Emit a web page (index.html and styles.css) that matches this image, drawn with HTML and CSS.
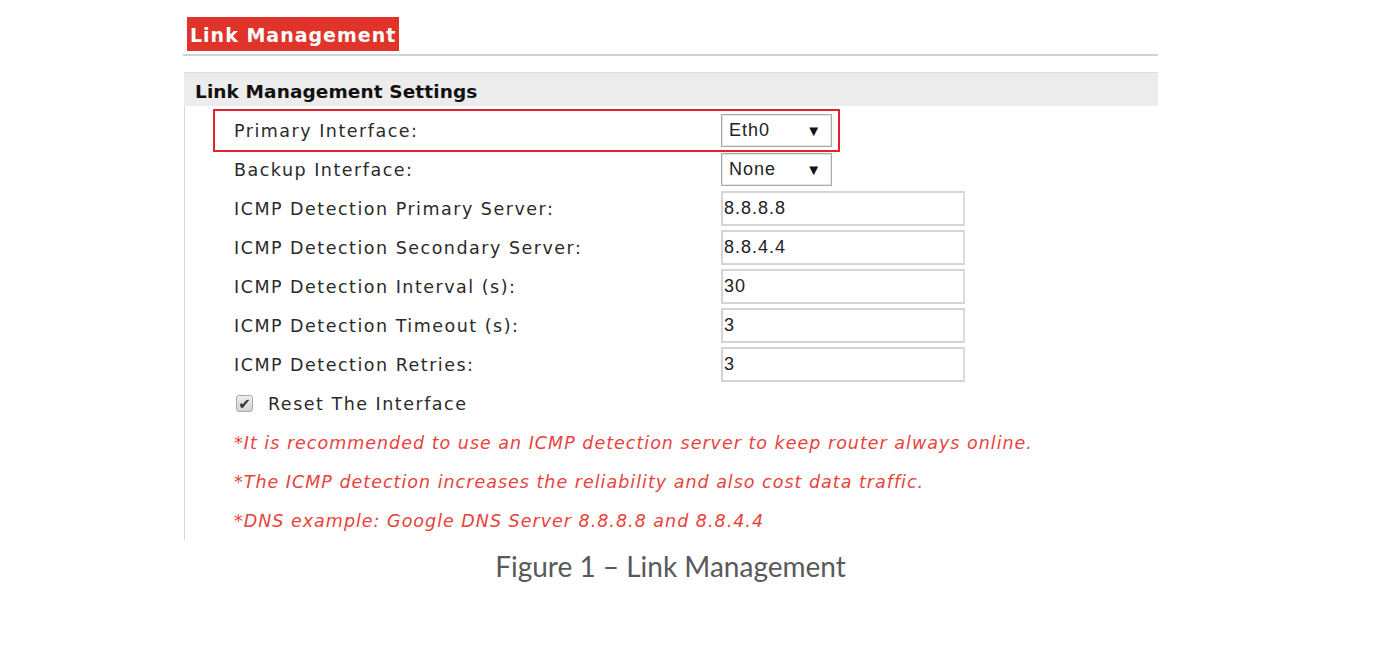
FILE: index.html
```html
<!DOCTYPE html>
<html lang="en">
<head>
    <meta charset="UTF-8">
    <title>Link Management</title>
    <link rel="stylesheet" href="styles.css">
</head>
<body>
<div class="page">
    <div class="title-bar">
        <span class="title">Link Management</span>
    </div>
    <div class="section-head">Link Management Settings</div>
    <div class="section-body">
        <div class="row highlight">
            <span class="label">Primary Interface:</span>
            <div class="select">Eth0<span class="arrow">▼</span></div>
        </div>
        <div class="row">
            <span class="label">Backup Interface:</span>
            <div class="select">None<span class="arrow">▼</span></div>
        </div>
        <div class="row">
            <span class="label">ICMP Detection Primary Server:</span>
            <input class="field" type="text" value="8.8.8.8">
        </div>
        <div class="row">
            <span class="label">ICMP Detection Secondary Server:</span>
            <input class="field" type="text" value="8.8.4.4">
        </div>
        <div class="row">
            <span class="label">ICMP Detection Interval (s):</span>
            <input class="field" type="text" value="30">
        </div>
        <div class="row">
            <span class="label">ICMP Detection Timeout (s):</span>
            <input class="field" type="text" value="3">
        </div>
        <div class="row">
            <span class="label">ICMP Detection Retries:</span>
            <input class="field" type="text" value="3">
        </div>
        <div class="row check-row">
            <span class="checkbox">✔</span>
            <span>Reset The Interface</span>
        </div>
        <div class="row note">*It is recommended to use an ICMP detection server to keep router always online.</div>
        <div class="row note">*The ICMP detection increases the reliability and also cost data traffic.</div>
        <div class="row note">*DNS example: Google DNS Server 8.8.8.8 and 8.8.4.4</div>
    </div>
    <div class="caption">Figure 1 – Link Management</div>
</div>
</body>
</html>
```

FILE: styles.css
```css
body {
    margin: 0;
    background-color: white;
    color: #2a2a2a;
    font-family: "DejaVu Sans", Verdana, sans-serif;
}

.page {
    width: 975px;
    margin-left: 183px;
}

.title-bar {
    padding: 17px 0 3px 4px;
    border-bottom: 2px solid #d2d2d2;
}

.title {
    display: inline-block;
    height: 34px;
    line-height: 36px;
    padding: 0 3px;
    background-color: #e0342a;
    color: white;
    font-weight: bold;
    font-size: 19px;
    letter-spacing: 1px;
}

.section-head {
    margin: 16px 0 0 1px;
    height: 33px;
    line-height: 38px;
    padding-left: 11px;
    border-top: 1px solid #dcdcdc;
    background-color: #ececec;
    color: #111;
    font-weight: bold;
    font-size: 18.5px;
    letter-spacing: 0.1px;
}

.section-body {
    margin-left: 1px;
    border-left: 1px solid #d6d6d6;
    padding: 5px 0 0 30px;
}

.row {
    display: flex;
    align-items: center;
    height: 39px;
    padding-left: 19px;
    box-sizing: border-box;
    font-size: 17.5px;
    letter-spacing: 1.5px;
}

.row.highlight {
    width: 623px;
    outline: 2px solid #e8202a;
}

.label {
    width: 487px;
    flex-shrink: 0;
}

.select {
    display: flex;
    align-items: center;
    justify-content: space-between;
    flex-shrink: 0;
    box-sizing: border-box;
    width: 111px;
    height: 33px;
    padding: 0 9px 0 7px;
    border: 1px solid #aaa;
    box-shadow: inset 0 0 0 1px #e6e6e6;
    font-family: "Liberation Sans", Arial, sans-serif;
    font-size: 18px;
    letter-spacing: 1px;
    color: #222;
}

.arrow {
    font-size: 15px;
    color: #111;
}

.field {
    flex-shrink: 0;
    box-sizing: border-box;
    width: 244px;
    height: 35px;
    margin: 0;
    padding: 0 1px;
    border: 2px solid #d4d4d4;
    border-right-color: #dcdcdc;
    font-family: "Liberation Sans", Arial, sans-serif;
    font-size: 18px;
    letter-spacing: 1px;
    color: #222;
    outline: none;
}

.check-row {
    padding-left: 21px;
}

.checkbox {
    display: inline-flex;
    align-items: center;
    justify-content: center;
    box-sizing: border-box;
    width: 17px;
    height: 17px;
    margin-right: 15px;
    border: 1px solid #a8a8a8;
    border-radius: 3px;
    background: linear-gradient(#eee, #d4d4d4);
    color: #333;
    font-size: 15px;
    letter-spacing: 0;
}

.note {
    font-style: italic;
    color: #e8433b;
    letter-spacing: 1px;
}

.caption {
    margin-top: 9px;
    text-align: center;
    font-family: Lato, "Open Sans", sans-serif;
    font-size: 28px;
    color: #595959;
}
```
